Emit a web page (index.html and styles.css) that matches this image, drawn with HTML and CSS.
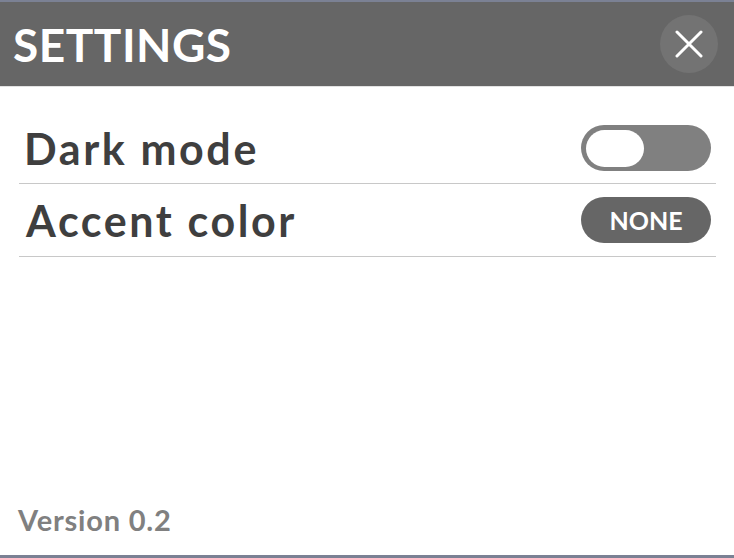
FILE: index.html
```html
<!DOCTYPE html>
<html lang="en">
<head>
<meta charset="utf-8">
<title>Settings</title>
<link rel="stylesheet" href="styles.css">
</head>
<body>
<div class="panel">
  <header class="header">
    <h1 class="title">SETTINGS</h1>
    <button class="close" aria-label="Close">
      <svg width="28" height="28" viewBox="0 0 28 28"><path d="M2 2 L26 26 M26 2 L2 26" stroke="#fff" stroke-width="3" stroke-linecap="round"/></svg>
    </button>
  </header>
  <main class="content">
    <div class="row">
      <span class="label">Dark mode</span>
      <span class="toggle"><span class="knob"></span></span>
    </div>
    <div class="row">
      <span class="label label-2">Accent color</span>
      <span class="pill">NONE</span>
    </div>
  </main>
  <footer class="footer">Version 0.2</footer>
</div>
</body>
</html>
```
FILE: styles.css
```css
html, body {
  margin: 0;
  padding: 0;
  background: #ffffff;
}
body {
  font-family: Lato, "Open Sans", sans-serif;
}
.panel {
  width: 734px;
  height: 558px;
  box-sizing: border-box;
  border-top: 2px solid #7b8194;
  border-bottom: 3px solid #7b8194;
  display: flex;
  flex-direction: column;
  background: #fff;
}
.header {
  height: 84px;
  background: #666666;
  display: flex;
  align-items: center;
  justify-content: space-between;
  padding: 0 16px 0 13px;
  border-bottom: 1px solid #e2e2e2;
}
.title {
  margin: 0;
  color: #fff;
  font-size: 46px;
  font-weight: 700;
  letter-spacing: 0.5px;
}
.close {
  width: 58px;
  height: 58px;
  border-radius: 50%;
  background: #737373;
  border: none;
  padding: 0;
  display: flex;
  align-items: center;
  justify-content: center;
}
.content {
  margin: 26px 18px 0 19px;
  flex: 1;
}
.row {
  height: 70px;
  display: flex;
  align-items: center;
  justify-content: space-between;
  border-bottom: 1px solid #c8c8c8;
  padding: 0 5px 0 5px;
}
.row + .row {
  height: 72px;
}
.label {
  font-size: 43px;
  font-weight: 700;
  color: #3f3f3f;
  letter-spacing: 2.6px;
}
.label-2 {
  margin-left: 2px;
}
.toggle {
  width: 130px;
  height: 46px;
  border-radius: 23px;
  background: #808080;
  display: flex;
  align-items: center;
  padding-left: 5px;
  box-sizing: border-box;
}
.knob {
  width: 58px;
  height: 37px;
  border-radius: 19px;
  background: #fff;
}
.pill {
  width: 130px;
  height: 46px;
  border-radius: 23px;
  background: #666666;
  color: #fff;
  font-size: 25px;
  font-weight: 700;
  display: flex;
  align-items: center;
  justify-content: center;
}
.footer {
  padding: 0 0 18px 18px;
  font-size: 29px;
  font-weight: 700;
  color: #808080;
  letter-spacing: 0.8px;
}
```
